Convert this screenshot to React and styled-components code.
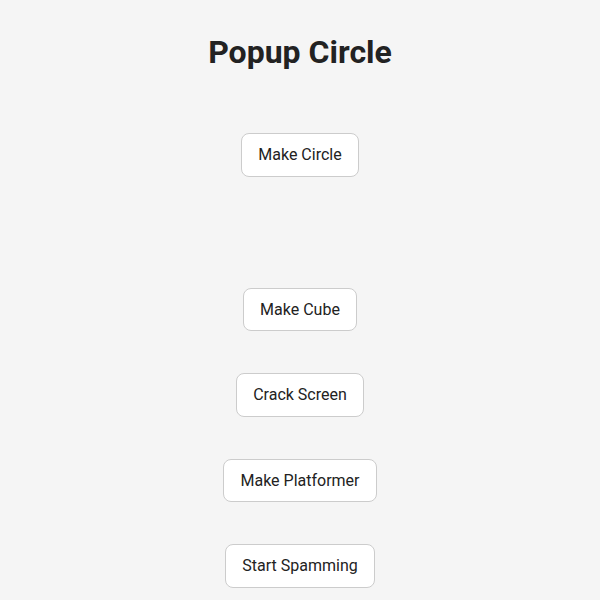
import styled, { createGlobalStyle } from "styled-components"

const Global = createGlobalStyle`
  html, body {
    margin: 0;
    padding: 0;
    background: #f5f5f5;
    font-family: Roboto, "Liberation Sans", sans-serif;
    color: #222;
  }
`

const Page = styled.div`
  display: flex;
  flex-direction: column;
  align-items: center;
  padding-top: 33px;
  min-height: 600px;
  box-sizing: border-box;
`

const Title = styled.h1`
  margin: 0 0 62px;
  font-size: 32px;
  font-weight: 700;
  line-height: 38px;
`

const Controls = styled.div`
  display: flex;
  flex-direction: column;
  align-items: center;
  gap: 42px;
`

// empty area where the circle pops up
const Stage = styled.div`
  height: 27px;
`

const Button = styled.button`
  box-sizing: border-box;
  height: 43.5px;
  font-family: Roboto, "Liberation Sans", sans-serif;
  font-size: 16px;
  color: #222;
  background: #fff;
  border: 1px solid #ccc;
  border-radius: 8px;
  padding: 0 16px;
  cursor: pointer;
`

const actions = ["Make Cube", "Crack Screen", "Make Platformer", "Start Spamming"]

export default function App() {
  return (
    <>
      <Global />
      <Page>
        <Title>Popup Circle</Title>
        <Controls>
          <Button>Make Circle</Button>
          <Stage />
          {actions.map(a => <Button key={a}>{a}</Button>)}
        </Controls>
      </Page>
    </>
  )
}
